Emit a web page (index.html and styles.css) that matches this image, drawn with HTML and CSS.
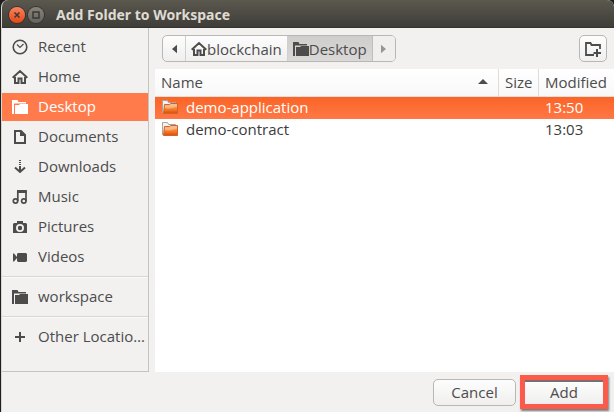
FILE: index.html
```html
<!DOCTYPE html>
<html lang="en">
<head>
<meta charset="utf-8">
<title>Add Folder to Workspace</title>
<link rel="stylesheet" href="styles.css">
</head>
<body>
<svg class="defs" aria-hidden="true">
  <symbol id="home" viewBox="0 0 16 16"><path d="M.7 8.700 8 2l7.300 6.700M3 8v6h3.500V9.500h3V14H13V8" fill="none" stroke="currentColor" stroke-width="2"/></symbol>
  <symbol id="folder" viewBox="0 0 16 16"><path d="M0 1h5.500l1 2H14v1.500H2V15H0z"/><path d="M3 6h4l1-1h8v10H3z"/></symbol>
  <symbol id="orange-folder" viewBox="0 0 16 16"><path d="M.5 14V1.500h5l1 2h7V6" fill="#f4f0eb" stroke="#aaa49d"/><path d="M2.500 5.500h5l1-1h7v10h-14z" fill="url(#orange)" stroke="#d2622a"/><path d="M3 9c4 1 8 0 12-1.500V5.200H9l-1 1H3z" fill="#ffd9b5" opacity=".45"/></symbol>
  <linearGradient id="orange" x2="0" y2="1"><stop offset="0" stop-color="#f9b782"/><stop offset=".5" stop-color="#f58538"/><stop offset="1" stop-color="#e04c00"/></linearGradient>
</svg>
<div class="window">
  <header class="titlebar">
    <button class="round close" aria-label="Close"><svg viewBox="0 0 16 16"><path d="m5.500 5.500 5 5m0-5-5 5"/></svg></button>
    <button class="round maximize" aria-label="Maximize"><svg viewBox="0 0 16 16"><path d="M5 5h6v6H5z"/></svg></button>
    <h1>Add Folder to Workspace</h1>
  </header>
  <div class="main">
    <nav class="sidebar">
      <a href="#"><svg viewBox="0 0 16 16"><g fill="none" stroke="currentColor"><circle cx="8" cy="8" r="6.800" stroke-width="1.600"/><path d="m5 5.500 3 3 3.500-3.500" stroke-width="1.200"/></g></svg><span>Recent</span></a>
      <a href="#"><svg><use href="#home"/></svg><span>Home</span></a>
      <a href="#" class="active"><svg><use href="#folder"/></svg><span>Desktop</span></a>
      <a href="#"><svg viewBox="0 0 16 16"><path d="M3 2h6l4 4v8H3z" fill="none" stroke="currentColor" stroke-width="2"/><path d="M8 2h1l4 4v1H8z"/></svg><span>Documents</span></a>
      <a href="#"><svg viewBox="0 0 16 16"><path d="M7 1h2v1H7zm0 2h2v1H7zm0 2h2v1H7zm0 2h2v5H7z"/><path d="m3 8.500 5 4.500 5-4.500" fill="none" stroke="currentColor" stroke-width="2"/></svg><span>Downloads</span></a>
      <a href="#"><svg viewBox="0 0 16 16"><g fill="none" stroke="currentColor" stroke-width="1.700"><circle cx="3.500" cy="12" r="2.200"/><circle cx="11.800" cy="12" r="2.200"/><path d="M5.800 12V1.500M14 12V1.500"/></g><path d="M5 1h9.800v3H5z"/></svg><span>Music</span></a>
      <a href="#"><svg viewBox="0 0 16 16"><path fill-rule="evenodd" d="M2 4h3V2h6v2h3l1 1v9H1V5zm6 1a4 4 0 1 0 0 8 4 4 0 0 0 0-8"/><circle cx="8" cy="9" r="2.200"/></svg><span>Pictures</span></a>
      <a href="#"><svg viewBox="0 0 16 16"><path d="M1 4.500h1L5 8V5l1-1h8l1 1v7l-1 1H6l-1-1V9l-3 3.500H1z"/></svg><span>Videos</span></a>
      <hr>
      <a href="#"><svg><use href="#folder"/></svg><span>workspace</span></a>
      <hr>
      <a href="#"><svg viewBox="0 0 16 16"><path d="M7 3h2v4h4v2H9v4H7V9H3V7h4z"/></svg><span>Other Locations</span></a>
    </nav>
    <main class="content">
      <div class="toolbar">
        <div class="path">
          <button class="arrow" aria-label="Back"><svg viewBox="0 0 6 10"><path d="M6 0v10L0 5z"/></svg></button>
          <button class="crumb"><svg><use href="#home"/></svg>blockchain</button>
          <button class="crumb current"><svg><use href="#folder"/></svg>Desktop</button>
          <button class="arrow" aria-label="Forward" disabled><svg viewBox="0 0 6 10"><path d="m0 0 6 5-6 5z"/></svg></button>
        </div>
        <button class="new-folder" aria-label="Create folder"><svg viewBox="0 0 18 16"><path d="M10 14H2V2h4.500l1 2H16v4" fill="none" stroke="currentColor" stroke-width="1.800"/><path d="M12 8h2v3h3v2h-3v3h-2v-3H9.500v-2H12z"/></svg></button>
      </div>
      <div class="files">
        <table>
          <colgroup><col><col class="size"><col class="modified"></colgroup>
          <thead><tr><th><span class="sort">Name<svg viewBox="0 0 10 5"><path d="m5 0 5 5H0z"/></svg></span></th><th>Size</th><th>Modified</th></tr></thead>
          <tbody>
            <tr class="selected"><td><span class="file"><svg><use href="#orange-folder"/></svg>demo-application</span></td><td></td><td>13:50</td></tr>
            <tr><td><span class="file"><svg><use href="#orange-folder"/></svg>demo-contract</span></td><td></td><td>13:03</td></tr>
          </tbody>
        </table>
      </div>
    </main>
  </div>
  <footer class="actions">
    <button class="action">Cancel</button>
    <div class="highlight"><button class="action">Add</button></div>
  </footer>
</div>
</body>
</html>
```
FILE: styles.css
```css
* { box-sizing: border-box; }
body {
  margin: 0;
  background: #211e1e;
  color: #4c4c4c;
  font: 15px/20px "Open Sans", "Noto Sans", sans-serif;
}
button { margin: 0; padding: 0; border: 0; background: none; color: inherit; font: inherit; }
svg { display: block; flex: none; width: 16px; height: 16px; fill: currentColor; }
.defs { position: absolute; width: 0; height: 0; }
.window {
  display: flex;
  flex-direction: column;
  min-height: 100vh;
  margin-left: 1px;
  border-left: 1px solid #d8d5d1;
  border-radius: 7px 7px 0 0;
  background: #f2f1f0;
  overflow: hidden;
}
.titlebar {
  display: flex;
  align-items: center;
  gap: 3px;
  height: 28px;
  margin-left: -1px;
  padding: 2px 8px 0;
  border-bottom: 1px solid #34332e;
  background: linear-gradient(#5b584e, #3e3d38);
  color: #dfdbd2;
}
.titlebar h1 { margin: 0 0 0 9px; font: 700 14px/20px "Noto Sans", "Open Sans", sans-serif; white-space: nowrap; }
.round { width: 16px; height: 16px; border-radius: 50%; box-shadow: 0 0 0 1px #35342f; color: #3b3933; }
.round path { fill: none; stroke: currentColor; stroke-width: 1.5; }
.close { background: linear-gradient(#f98360, #e94713); }
.maximize { background: linear-gradient(#86847c, #65635b); }
.main { display: flex; flex: 1; }
.sidebar {
  display: flex;
  flex-direction: column;
  gap: 2px;
  width: 147px;
  padding-top: 5px;
  border: solid #c5c3c0;
  border-width: 0 1px 1px 0;
}
.sidebar a {
  display: flex;
  align-items: center;
  gap: 10px;
  height: 28px;
  padding-left: 10px;
  color: inherit;
  text-decoration: none;
}
.sidebar span { flex: 1; min-width: 0; padding-bottom: 2px; overflow: hidden; text-overflow: ellipsis; white-space: nowrap; }
.sidebar .active { background: #ff7b4b; color: #fff; }
.sidebar hr { width: 100%; height: 2px; margin: 3px 0; border: 0; border-top: 1px solid #d8d6d4; background: #fafafa; }
.content { display: flex; flex: 1; flex-direction: column; min-width: 0; padding-left: 6px; }
.toolbar { display: flex; align-items: center; justify-content: space-between; height: 41px; padding: 0 7px; }
.path, .new-folder, .action {
  border: 1px solid #b9b7b4;
  border-radius: 5px;
  background: linear-gradient(#fdfdfd, #f0efee);
}
.path { display: flex; height: 27px; overflow: hidden; }
.arrow { display: flex; align-items: center; justify-content: center; width: 22px; }
.arrow svg { width: 5px; height: 10px; }
.arrow:disabled { background: #f0efee; color: #989694; }
.crumb { display: flex; align-items: center; padding: 0 5px; border-left: 1px solid #d2d0ce; }
.current { border-right: 1px solid #c0bebc; background: linear-gradient(#cecdcc, #dad9d8); }
.new-folder { display: grid; place-items: center; width: 28px; height: 27px; }
.new-folder svg { width: 18px; }
.files { flex: 1; background: #fff; }
table { width: 100%; border-spacing: 0; table-layout: fixed; }
.size { width: 40px; }
.modified { width: 76px; }
th { height: 28px; padding: 0 6px 2px; border-bottom: 1px solid #e0dfdd; background: linear-gradient(#fff, #f8f8f8); font-weight: 400; text-align: left; }
th + th { border-left: 1px solid #dddcda; }
td { height: 22px; padding: 0 7px 2px; color: #3c3c3c; line-height: 20px; }
.sort { display: flex; align-items: center; justify-content: space-between; }
.sort svg { width: 10px; height: 5px; margin-right: 4px; }
.file { display: flex; align-items: center; gap: 8px; }
.selected { background: linear-gradient(#fb6426, #ff7846); }
.selected td { color: #fff; }
.actions { display: flex; align-items: center; justify-content: flex-end; gap: 4px; height: 40px; padding: 0 6px; }
.action { width: 83px; height: 27px; }
.highlight { border: 5px solid #fc5a4b; box-shadow: 1px 2px 2px #777; }
.highlight .action { display: block; width: 78px; height: 24px; padding-bottom: 2px; border: 0; border-top: 2px solid #77706c; border-radius: 0; }
```
